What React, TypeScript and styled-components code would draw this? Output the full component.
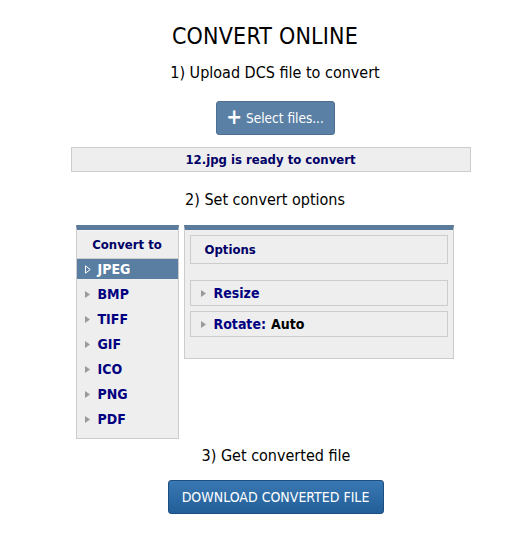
import React from "react";
import styled, { createGlobalStyle } from "styled-components";

const Global = createGlobalStyle`
  html, body { margin: 0; padding: 0; background: #fff; }
  body { font-family: "DejaVu Sans Condensed", "DejaVu Sans", sans-serif; color: #000; }
`;

const Page = styled.div`
  width: 530px;
  display: flex;
  flex-direction: column;
  align-items: center;
  padding-top: 22px;
`;

const Title = styled.h1`
  margin: 0;
  font-size: 23px;
  font-weight: normal;
  line-height: 28px;
  letter-spacing: 0.2px;
`;

const Step = styled.div<{ $mt: number; $shift: number }>`
  margin-top: ${(p) => p.$mt}px;
  margin-left: ${(p) => p.$shift * 2}px;
  font-size: 16px;
  line-height: 20px;
`;

const SelectButton = styled.button`
  margin-top: 18px;
  margin-left: 20px;
  width: 119px;
  height: 34px;
  border: 1px solid #4c6f92;
  border-radius: 3px;
  background: #5b80a5;
  color: #fff;
  font-family: inherit;
  font-size: 13.5px;
  display: flex;
  align-items: center;
  justify-content: center;
  gap: 4px;
  padding: 0;
`;

const Plus = styled.span`
  font-size: 21px;
  font-weight: bold;
  line-height: 20px;
  margin-top: -2px;
`;

const Status = styled.div`
  margin-top: 12px;
  margin-left: 11px;
  width: 398px;
  height: 23px;
  background: #eeeeee;
  border: 1px solid #cccccc;
  color: #000066;
  font-weight: bold;
  font-size: 13px;
  display: flex;
  align-items: center;
  justify-content: center;
`;

const Panels = styled.div`
  margin-top: 15px;
  display: flex;
  align-items: flex-start;
  gap: 5px;
  margin-left: -1px;
`;

const Panel = styled.div<{ $w: number; $h: number }>`
  width: ${(p) => p.$w}px;
  height: ${(p) => p.$h}px;
  box-sizing: border-box;
  border: 1px solid #cccccc;
  border-top: 5px solid #5a7b9c;
  background: #eeeeee;
`;

const ListHeader = styled.div`
  height: 27px;
  border-bottom: 1px solid #cccccc;
  border-top: 1px solid #f6f6f6;
  display: flex;
  align-items: center;
  justify-content: center;
  color: #000066;
  font-weight: bold;
  font-size: 13px;
`;

const ArrowSvg = styled.svg`
  width: 6px;
  height: 9px;
  margin-right: 7px;
  flex: none;
`;

function Arrow({ sel }: { sel?: boolean }) {
  return (
    <ArrowSvg viewBox="0 0 6 9">
      {sel ? (
        <polygon points="0.5,0.8 5.2,4.5 0.5,8.2" fill="none" stroke="#fff" strokeWidth="1" />
      ) : (
        <polygon points="0,1 5,4.5 0,8" fill="#9a9a9a" />
      )}
    </ArrowSvg>
  );
}

const ListItem = styled.div<{ $sel?: boolean }>`
  height: ${(p) => (p.$sel ? 20 : 25)}px;
  padding-left: 8px;
  display: flex;
  align-items: ${(p) => (p.$sel ? "center" : "flex-end")};
  background: ${(p) => (p.$sel ? "#5a7ea1" : "transparent")};
  color: ${(p) => (p.$sel ? "#fff" : "#000080")};
  font-weight: bold;
  font-size: 14px;
  line-height: 20px;
`;

const ItemInner = styled.span`
  display: flex;
  align-items: center;
  height: 20px;
`;

const OptionsBody = styled.div`
  padding: 5px 5px 0 5px;
  display: flex;
  flex-direction: column;
`;

const OptionsHeader = styled.div`
  height: 27px;
  border: 1px solid #cccccc;
  background: #eeeeee;
  padding-left: 14px;
  display: flex;
  align-items: center;
  color: #000066;
  font-weight: bold;
  font-size: 13px;
`;

const OptionRow = styled.div<{ $mt: number }>`
  margin-top: ${(p) => p.$mt}px;
  height: 24px;
  border: 1px solid #cccccc;
  padding-left: 10px;
  display: flex;
  align-items: center;
  color: #000080;
  font-weight: bold;
  font-size: 14px;
`;

const Value = styled.span`
  color: #000;
  margin-left: 5px;
`;

const DownloadButton = styled.button`
  margin-top: 14px;
  margin-left: 21px;
  width: 216px;
  height: 34px;
  border: 1px solid #1c4f82;
  border-radius: 3px;
  background: linear-gradient(#3a78b3, #225f99);
  color: #fff;
  font-family: inherit;
  font-size: 14px;
  padding: 0;
`;

const formats = ["JPEG", "BMP", "TIFF", "GIF", "ICO", "PNG", "PDF"];

export default function App() {
  return (
    <>
      <Global />
      <Page>
        <Title>CONVERT ONLINE</Title>
        <Step $mt={13} $shift={10}>1) Upload DCS file to convert</Step>
        <SelectButton>
          <Plus>+</Plus>
          <span>Select files...</span>
        </SelectButton>
        <Status>12.jpg is ready to convert</Status>
        <Step $mt={18} $shift={0}>2) Set convert options</Step>
        <Panels>
          <Panel $w={103} $h={214}>
            <ListHeader>Convert to</ListHeader>
            {formats.map((f, i) => (
              <ListItem key={f} $sel={i === 0}>
                <ItemInner>
                  <Arrow sel={i === 0} />
                  {f}
                </ItemInner>
              </ListItem>
            ))}
          </Panel>
          <Panel $w={270} $h={134}>
            <OptionsBody>
              <OptionsHeader>Options</OptionsHeader>
              <OptionRow $mt={16}>
                <Arrow />
                Resize
              </OptionRow>
              <OptionRow $mt={5}>
                <Arrow />
                Rotate:<Value>Auto</Value>
              </OptionRow>
            </OptionsBody>
          </Panel>
        </Panels>
        <Step $mt={7} $shift={11}>3) Get converted file</Step>
        <DownloadButton>DOWNLOAD CONVERTED FILE</DownloadButton>
      </Page>
    </>
  );
}
